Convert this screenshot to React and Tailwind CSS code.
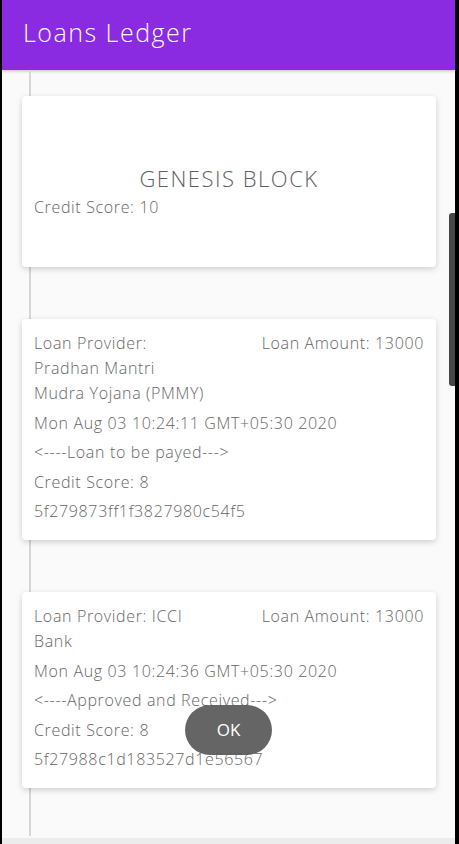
import React from 'react';

// ledger entries shown below the genesis block
const blocks = [
  {
    id: 'b1',
    provider: ['Loan Provider:', 'Pradhan Mantri', 'Mudra Yojana (PMMY)'],
    amount: 13000,
    date: 'Mon Aug 03 10:24:11 GMT+05:30 2020',
    status: '<----Loan to be payed--->',
    score: 8,
    hash: '5f279873ff1f3827980c54f5',
  },
  {
    id: 'b2',
    provider: ['Loan Provider: ICCI', 'Bank'],
    amount: 13000,
    date: 'Mon Aug 03 10:24:36 GMT+05:30 2020',
    status: '<----Approved and Received--->',
    score: 8,
    hash: '5f27988c1d183527d1e56567',
  },
];

const font = { fontFamily: '"Open Sans", "Noto Sans", sans-serif' };

export default function App() {
  return (
    <div className="relative h-[844px] w-[459px] overflow-hidden bg-black" style={font}>
      <div className="ml-[2px] mr-[4px] flex h-full flex-col bg-[#fafafa]">
        {/* App bar */}
        <header className="flex h-[70px] shrink-0 items-center bg-[#8a2be2] px-[21px] pb-[4px] shadow-[0_1px_3px_rgba(0,0,0,0.25)]">
          <h1 className="text-[25px] font-light tracking-[1.5px] text-white">Loans Ledger</h1>
        </header>

        {/* Chain */}
        <div className="relative flex-1">
          <div className="absolute left-[27px] top-0 h-[766px] w-[2px] bg-[#d6d6d6]" />
          <div className="relative flex flex-col gap-[52px] pl-[20px] pr-[19px] pt-[26px]">
            <div className="h-[171px] rounded-[4px] bg-white px-[12px] pt-[67px] shadow-[0_2px_6px_rgba(0,0,0,0.18)]">
              <p className="text-center text-[22px] font-light leading-[30px] tracking-[1.5px] text-[#5e5e5e]">GENESIS BLOCK</p>
              <p className="mt-[2px] text-[16px] font-light leading-[25px] tracking-[0.65px] text-[#666]">Credit Score: 10</p>
            </div>

            {blocks.map((b) => (
              <div key={b.id} className="rounded-[4px] bg-white px-[12px] pb-[16px] pt-[12px] text-[16px] font-light leading-[25px] tracking-[0.65px] text-[#666] shadow-[0_2px_6px_rgba(0,0,0,0.18)]">
                <div className="flex justify-between">
                  <div className="flex flex-col">
                    {b.provider.map((line) => (
                      <span key={line}>{line}</span>
                    ))}
                  </div>
                  <span className="whitespace-nowrap">Loan Amount: {b.amount}</span>
                </div>
                <p className="mt-[4.5px]">{b.date}</p>
                <p className="mt-[4.5px]">{b.status}</p>
                <p className="mt-[4.5px]">Credit Score: {b.score}</p>
                <p className="mt-[4.5px]">{b.hash}</p>
              </div>
            ))}
          </div>
        </div>
        <div className="h-[6px] shrink-0 bg-[#ececec]" />
      </div>

      {/* scrollbar */}
      <div className="absolute left-[449px] top-[213px] h-[173px] w-[6px] rounded-l-[3px] bg-[#474747]" />

      {/* toast */}
      <div className="absolute left-[185px] top-[705px] flex h-[50px] w-[87px] items-center justify-center rounded-full bg-[#5d5d5d]/95">
        <span className="text-[17px] text-white">OK</span>
      </div>
    </div>
  );
}
